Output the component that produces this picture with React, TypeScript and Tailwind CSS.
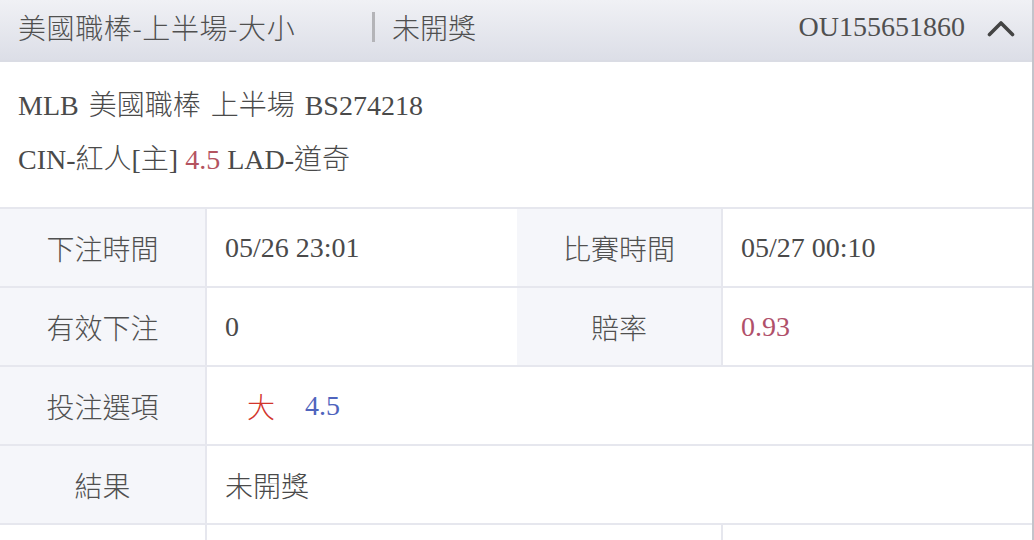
const serif = "font-['Liberation_Serif','Noto_Sans_CJK_TC',serif]";
const sans = "font-['Noto_Sans_CJK_TC','Noto_Sans',sans-serif]";

function Label({ text, blank }: { text?: string; blank?: boolean }) {
  return (
    <div
      className={`flex h-[77px] items-center justify-center border-r-2 border-[#e6e7ee] ${
        blank ? 'bg-white' : 'bg-[#f5f6fa]'
      } ${sans} text-[28px] font-light text-[#505050]`}
    >
      {text}
    </div>
  );
}

function App() {
  return (
    <div className="h-[540px] w-[1034px] overflow-hidden bg-white">
      <div className="w-full border-r-2 border-[#c3c4cb]">
        {/* header bar */}
        <div
          className={`flex h-[62px] items-center border-b-2 border-[#dadce4] bg-gradient-to-b from-[#f0f1f5] to-[#dcdee7] pb-[6px] pl-[18px] pr-[17px] text-[28px] text-[#505050] ${sans}`}
        >
          <span className="w-[354px] font-light tracking-[0.6px]">美國職棒-上半場-大小</span>
          <span className="h-[30px] w-[3px] bg-[#b4b4b8]"></span>
          <span className="ml-[17px] font-light">未開獎</span>
          <span className={`ml-auto ${serif}`}>OU155651860</span>
          <svg
            className="ml-[22px] mt-[2px]"
            width="28"
            height="18"
            viewBox="0 0 28 18"
            fill="none"
          >
            <polyline
              points="2.5,15.5 14,4 25.5,15.5"
              stroke="#444"
              strokeWidth="3.6"
              strokeLinecap="round"
              strokeLinejoin="round"
            />
          </svg>
        </div>

        {/* match info */}
        <div
          className={`flex h-[145px] flex-col px-[18px] pt-[17px] text-[28px] font-light leading-[54px] text-[#4a4a4a] ${serif}`}
        >
          <p className="[word-spacing:3px]">MLB 美國職棒 上半場 BS274218</p>
          <p>
            CIN-紅人[主] <span className="text-[#b4535f]">4.5</span> LAD-道奇
          </p>
        </div>

        {/* detail table */}
        <div
          className={`grid grid-cols-[207px_310px_206px_1fr] border-t-2 border-[#e6e7ee] text-[28px] text-[#4a4a4a] ${serif}`}
        >
          <Label text="下注時間" />
          <div className="flex h-[77px] items-center pl-[18px]">05/26 23:01</div>
          <Label text="比賽時間" />
          <div className="flex h-[77px] items-center pl-[18px]">05/27 00:10</div>
          <div className="col-span-4 h-[2px] bg-[#e6e7ee]"></div>

          <Label text="有效下注" />
          <div className="flex h-[77px] items-center pl-[18px]">0</div>
          <Label text="賠率" />
          <div className="flex h-[77px] items-center pl-[18px] text-[#b0506a]">0.93</div>
          <div className="col-span-4 h-[2px] bg-[#e6e7ee]"></div>

          <Label text="投注選項" />
          <div className="col-span-3 flex h-[77px] items-center pl-[18px]">
            <span className={`ml-[22px] font-light text-[#d2352c] ${sans}`}>大</span>
            <span className="ml-[30px] text-[#4f64bd]">4.5</span>
          </div>
          <div className="col-span-4 h-[2px] bg-[#e6e7ee]"></div>

          <Label text="結果" />
          <div className={`col-span-3 flex h-[77px] items-center pl-[18px] font-light ${sans}`}>
            未開獎
          </div>
          <div className="col-span-4 h-[2px] bg-[#e6e7ee]"></div>

          <Label blank />
          <div className="h-[77px]"></div>
          <Label blank />
          <div className="h-[77px]"></div>
        </div>
      </div>
    </div>
  );
}

export default App;
